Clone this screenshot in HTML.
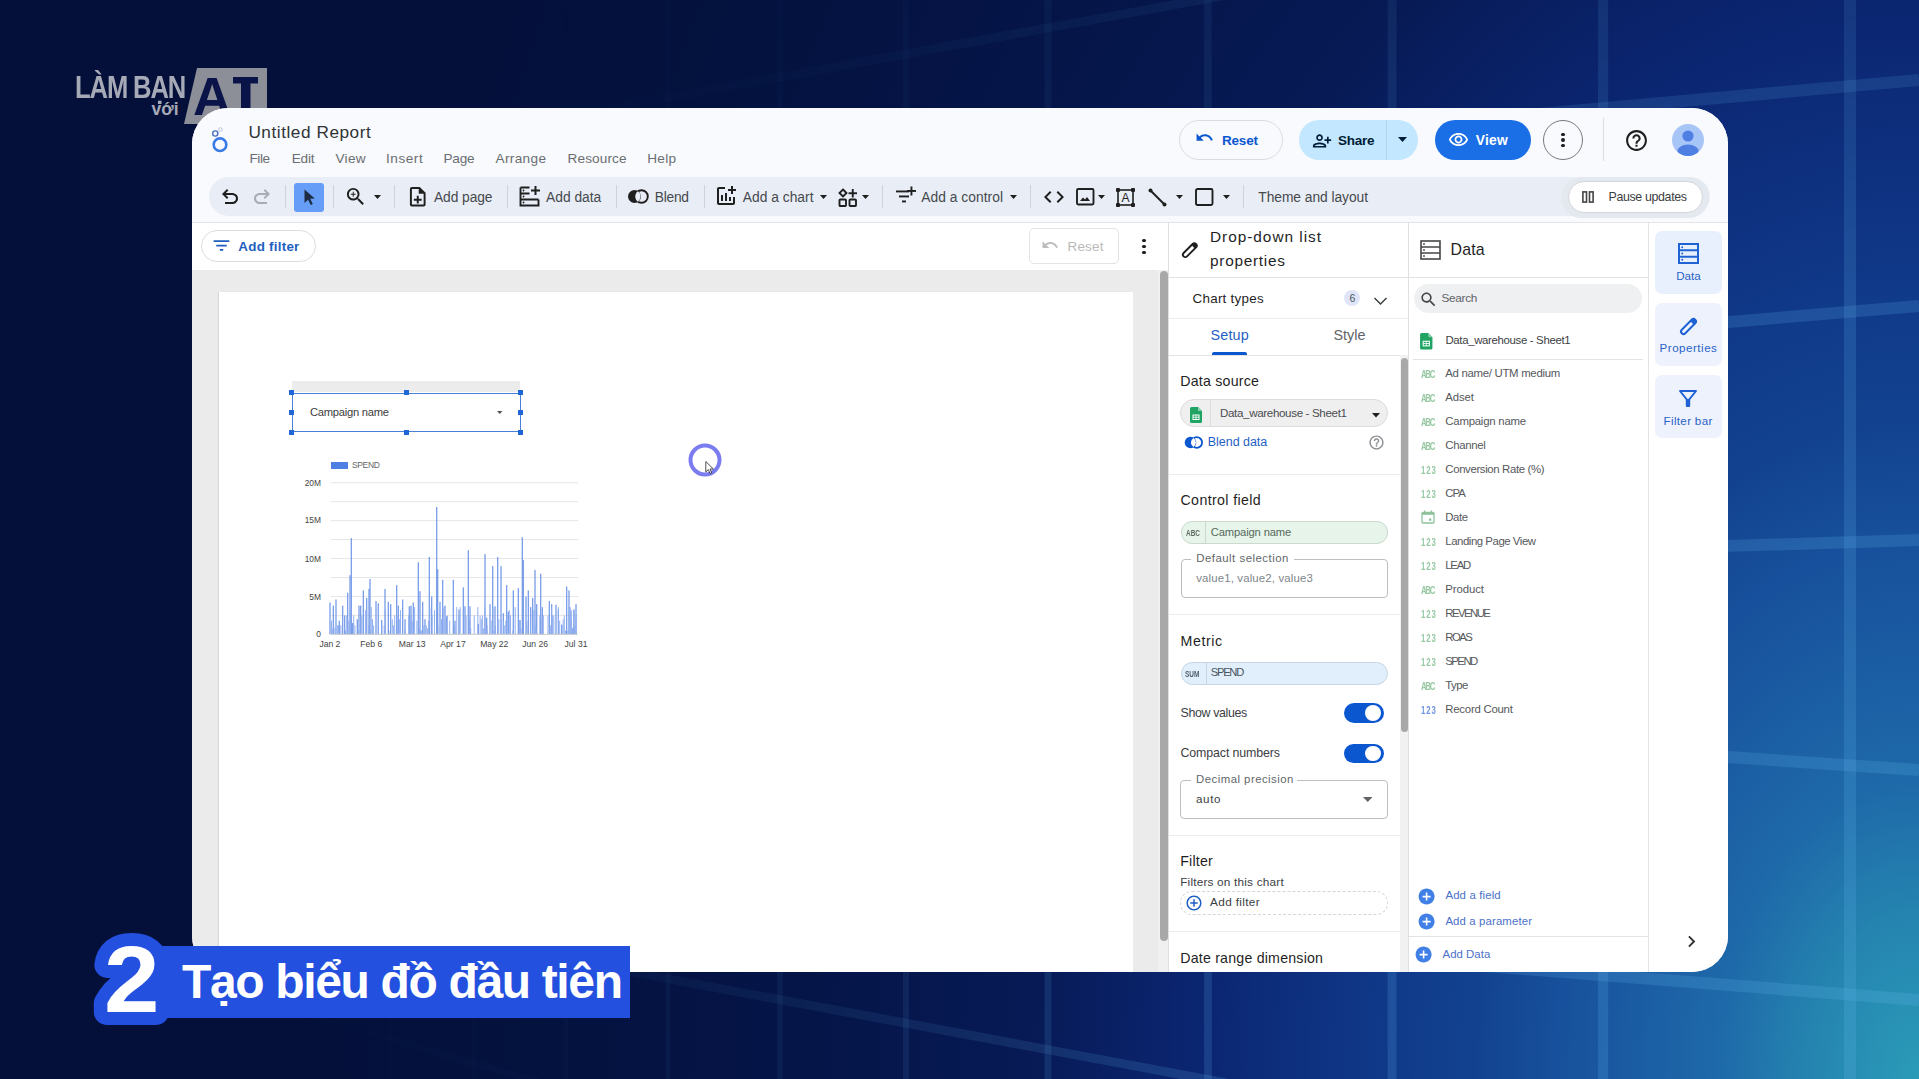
<!DOCTYPE html>
<html><head><meta charset="utf-8"><style>
html,body{margin:0;padding:0;}
body{width:1919px;height:1079px;overflow:hidden;position:relative;font-family:"Liberation Sans",sans-serif;background:#03103c;}
.t{position:absolute;white-space:nowrap;line-height:1;}
.b{position:absolute;box-sizing:border-box;}
</style></head><body>
<div class="b" style="left:0;top:0;width:1919px;height:1079px;background:radial-gradient(ellipse 1620px 2400px at 1919px 1079px, #2b9bb8 0.0%, #2585b0 6.7%, #1e69a9 12.5%, #17509c 22.5%, #12428f 27.5%, #103a8a 32.5%, #0b2672 44.2%, #071a55 55.0%, #051548 68.3%, #04123f 83.3%, #04103a 100.0%);"></div>
<svg class="b" style="left:0px;top:0px;-webkit-mask-image:radial-gradient(ellipse 1900px 2300px at 1919px 1079px, #000 0%, rgba(0,0,0,0.9) 36%, rgba(0,0,0,0.45) 55%, rgba(0,0,0,0.15) 70%, rgba(0,0,0,0) 86%);mask-image:radial-gradient(ellipse 1900px 2300px at 1919px 1079px, #000 0%, rgba(0,0,0,0.9) 36%, rgba(0,0,0,0.45) 55%, rgba(0,0,0,0.15) 70%, rgba(0,0,0,0) 86%);" width="1919" height="1079" viewBox="0 0 1919 1079"><rect x="224.3" y="0" width="3.4" height="1079" fill="rgba(100,185,240,0.2)"/><rect x="312.2" y="0" width="3.6" height="1079" fill="rgba(100,185,240,0.2)"/><rect x="388.1" y="0" width="3.9" height="1079" fill="rgba(100,185,240,0.2)"/><rect x="471.9" y="0" width="4.2" height="1079" fill="rgba(100,185,240,0.2)"/><rect x="563.7" y="0" width="4.5" height="1079" fill="rgba(100,185,240,0.2)"/><rect x="665.5" y="0" width="5.0" height="1079" fill="rgba(100,185,240,0.2)"/><rect x="777.3" y="0" width="5.5" height="1079" fill="rgba(100,185,240,0.2)"/><rect x="903.0" y="0" width="6.1" height="1079" fill="rgba(100,185,240,0.2)"/><rect x="1044.6" y="0" width="6.8" height="1079" fill="rgba(100,185,240,0.2)"/><rect x="1204.1" y="0" width="7.7" height="1079" fill="rgba(100,185,240,0.2)"/><rect x="1387.6" y="0" width="8.9" height="1079" fill="rgba(100,185,240,0.2)"/><rect x="1597.9" y="0" width="10.3" height="1079" fill="rgba(100,185,240,0.2)"/><rect x="1844.0" y="0" width="12.0" height="1079" fill="rgba(100,185,240,0.2)"/><line x1="0" y1="220.0" x2="1919" y2="-131.8" stroke="rgba(100,185,240,0.2)" stroke-width="9"/><line x1="0" y1="250.8" x2="1919" y2="80.0" stroke="rgba(100,185,240,0.2)" stroke-width="12"/><line x1="0" y1="466.8" x2="1919" y2="306.0" stroke="rgba(100,185,240,0.2)" stroke-width="12"/><line x1="0" y1="600.3" x2="1919" y2="540.0" stroke="rgba(100,185,240,0.2)" stroke-width="12"/><line x1="0" y1="639.4" x2="1919" y2="770.0" stroke="rgba(100,185,240,0.2)" stroke-width="12"/><line x1="0" y1="849.3" x2="1919" y2="1000.0" stroke="rgba(100,185,240,0.2)" stroke-width="12"/><line x1="0" y1="854.2" x2="1919" y2="1212.2" stroke="rgba(100,185,240,0.2)" stroke-width="9"/><line x1="0" y1="926.4" x2="1919" y2="1480.1" stroke="rgba(100,185,240,0.2)" stroke-width="7"/></svg>
<div class="t" style="left:75px;top:71px;font-size:32px;font-weight:700;color:#a6a9b6;letter-spacing:-1.4px;transform:scaleX(0.80);transform-origin:left top;">LÀM BẠN</div>
<div class="t" style="left:151.5px;top:101px;font-size:17.5px;font-weight:700;color:#a6a9b6;">với</div>
<svg class="b" style="left:184px;top:68px;" width="84" height="56" viewBox="0 0 84 56"><polygon points="13,0 83,0 83,56 0,56" fill="#8d8f98"/><text x="9" y="47" font-family="Liberation Sans" font-weight="700" font-size="53" fill="#0a1448">A</text><rect x="49" y="9" width="25" height="6.5" fill="#0a1448"/><rect x="57" y="9" width="9.5" height="47" fill="#0a1448"/></svg>
<div class="b" style="left:192px;top:108px;width:1536px;height:864px;border-radius:36px;overflow:hidden;background:#fff;">
<div class="b" style="left:-192px;top:-108px;width:1919px;height:1079px;">
<div class="b" style="left:192px;top:108px;width:1536px;height:114px;background:#f8fafd;"></div>
<div class="b" style="left:192px;top:222px;width:1536px;height:1px;background:#e3e5e8;"></div>
<svg class="b" style="left:208px;top:125px;" width="26" height="30" viewBox="0 0 26 30"><circle cx="12" cy="19.7" r="6.3" fill="none" stroke="#3b7be8" stroke-width="2.6"/><circle cx="7.3" cy="8.5" r="2.6" fill="none" stroke="#4a6fc0" stroke-width="1.4"/><circle cx="12.4" cy="4.5" r="1.8" fill="none" stroke="#b8c4da" stroke-width="1"/></svg>
<div class="t" id="t0" style="left:248.4px;top:124.4px;font-size:17.20px;color:#303336;font-weight:400;letter-spacing:0.554px;">Untitled Report</div>
<div class="t" id="t1" style="left:249.5px;top:151.7px;font-size:13.60px;color:#6b6e72;font-weight:400;letter-spacing:-0.469px;">File</div>
<div class="t" id="t2" style="left:291.7px;top:151.7px;font-size:13.60px;color:#6b6e72;font-weight:400;letter-spacing:-0.175px;">Edit</div>
<div class="t" id="t3" style="left:335.4px;top:151.7px;font-size:13.60px;color:#6b6e72;font-weight:400;letter-spacing:0.326px;">View</div>
<div class="t" id="t4" style="left:386.0px;top:151.7px;font-size:13.60px;color:#6b6e72;font-weight:400;letter-spacing:0.539px;">Insert</div>
<div class="t" id="t5" style="left:443.4px;top:151.7px;font-size:13.60px;color:#6b6e72;font-weight:400;letter-spacing:-0.154px;">Page</div>
<div class="t" id="t6" style="left:495.6px;top:151.7px;font-size:13.60px;color:#6b6e72;font-weight:400;letter-spacing:0.337px;">Arrange</div>
<div class="t" id="t7" style="left:567.5px;top:151.7px;font-size:13.60px;color:#6b6e72;font-weight:400;letter-spacing:0.130px;">Resource</div>
<div class="t" id="t8" style="left:647.3px;top:151.7px;font-size:13.60px;color:#6b6e72;font-weight:400;letter-spacing:0.247px;">Help</div>
<div class="b" style="left:1179px;top:120px;width:104px;height:40px;border:1px solid #dadce0;border-radius:20px;background:#f8fafd;"></div>
<svg class="b" style="left:1194.5px;top:127.5px;" width="19" height="19" viewBox="0 0 24 24"><path d="M12.5 8c-2.65 0-5.05.99-6.9 2.6L2 7v9h9l-3.62-3.62c1.39-1.16 3.16-1.88 5.12-1.88 3.54 0 6.55 2.31 7.6 5.5l2.37-.78C21.08 11.03 17.15 8 12.5 8z" fill="#0b57d0"/></svg>
<div class="t" id="t9" style="left:1222.0px;top:134.2px;font-size:13.50px;color:#0b57d0;font-weight:700;letter-spacing:-0.194px;">Reset</div>
<div class="b" style="left:1299px;top:120px;width:119px;height:40px;border-radius:20px;background:#c2e7ff;"></div>
<div class="b" style="left:1386px;top:120px;width:1px;height:40px;background:#aed3ee;"></div>
<svg class="b" style="left:1311.5px;top:131px;" width="20" height="18" viewBox="0 0 20 18"><g transform="translate(20,0) scale(-1,1)"><path d="M15 12c2.21 0 4-1.79 4-4s-1.79-4-4-4-4 1.79-4 4 1.79 4 4 4zm0-6c1.1 0 2 .9 2 2s-.9 2-2 2-2-.9-2-2 .9-2 2-2zm0 8c-2.67 0-8 1.34-8 4v2h16v-2c0-2.66-5.33-4-8-4zm-6 4c.22-.72 3.31-2 6-2 2.7 0 5.8 1.29 6 2H9zm-3-3v-3h3v-2H6V7H4v3H1v2h3v3z" fill="#001d35" transform="scale(0.83)"/></g></svg>
<div class="t" id="t10" style="left:1338.0px;top:133.8px;font-size:13.50px;color:#001d35;font-weight:700;letter-spacing:-0.283px;">Share</div>
<svg class="b" style="left:1397.5px;top:137px;" width="9" height="5" viewBox="0 0 9 5"><path d="M0 0h9L4.5 5z" fill="#001d35"/></svg>
<div class="b" style="left:1434.5px;top:120px;width:96.5px;height:40px;border-radius:20px;background:#1a6fe6;"></div>
<svg class="b" style="left:1448px;top:129px;" width="21" height="21" viewBox="0 0 24 24"><path d="M12 6.5c3.79 0 7.17 2.13 8.82 5.5-1.65 3.37-5.02 5.5-8.82 5.5S4.83 15.37 3.18 12C4.83 8.63 8.21 6.5 12 6.5m0-2C7 4.5 2.73 7.61 1 12c1.73 4.39 6 7.5 11 7.5s9.27-3.11 11-7.5c-1.73-4.39-6-7.5-11-7.5zm0 5c1.38 0 2.5 1.12 2.5 2.5s-1.12 2.5-2.5 2.5-2.5-1.12-2.5-2.5 1.12-2.5 2.5-2.5m0-2c-2.48 0-4.5 2.02-4.5 4.5s2.02 4.5 4.5 4.5 4.5-2.02 4.5-4.5-2.02-4.5-4.5-4.5z" fill="#ffffff"/></svg>
<div class="t" id="t11" style="left:1475.7px;top:133.8px;font-size:13.80px;color:#ffffff;font-weight:700;letter-spacing:0.266px;">View</div>
<div class="b" style="left:1543px;top:120px;width:40px;height:40px;border:1px solid #79797c;border-radius:20px;"></div>
<div class="b" style="left:1561.4px;top:133.1px;width:3.3px;height:3.3px;background:#1f1f1f;border-radius:2px;"></div>
<div class="b" style="left:1561.4px;top:138.4px;width:3.3px;height:3.3px;background:#1f1f1f;border-radius:2px;"></div>
<div class="b" style="left:1561.4px;top:143.7px;width:3.3px;height:3.3px;background:#1f1f1f;border-radius:2px;"></div>
<div class="b" style="left:1603px;top:118px;width:1px;height:43px;background:#dcdde0;"></div>
<svg class="b" style="left:1623.5px;top:127.5px;" width="25" height="25" viewBox="0 0 24 24"><path d="M11 18h2v-2h-2v2zm1-16C6.48 2 2 6.48 2 12s4.48 10 10 10 10-4.48 10-10S17.52 2 12 2zm0 18c-4.41 0-8-3.59-8-8s3.59-8 8-8 8 3.59 8 8-3.59 8-8 8zm0-14c-2.21 0-4 1.79-4 4h2c0-1.1.9-2 2-2s2 .9 2 2c0 2-3 1.75-3 5h2c0-2.25 3-2.5 3-5 0-2.21-1.79-4-4-4z" fill="#1f1f1f"/></svg>
<svg class="b" style="left:1672px;top:124px;" width="32" height="32" viewBox="0 0 32 32"><defs><clipPath id="av"><circle cx="16" cy="16" r="16"/></clipPath></defs><circle cx="16" cy="16" r="16" fill="#a8c5f7"/><g clip-path="url(#av)"><circle cx="16" cy="12" r="5.6" fill="#4f7fe3"/><ellipse cx="16" cy="27" rx="10.5" ry="6.5" fill="#4f7fe3"/></g></svg>
<div class="b" style="left:209px;top:177px;width:1501px;height:39px;border-radius:20px;background:#e9eef6;"></div>
<svg class="b" style="left:218px;top:184.5px;" width="24" height="24" viewBox="0 0 24 24"><path d="M7 19v-2h7.1c1.05 0 1.96-.33 2.74-1S18 14.5 18 13.5s-.39-1.83-1.16-2.5S15.15 10 14.1 10H7.8l2.6 2.6L9 14 4 9l5-5 1.4 1.4L7.8 8h6.3c1.62 0 3 .52 4.16 1.58S20 11.93 20 13.5s-.58 2.87-1.74 3.93S15.72 19 14.1 19H7z" fill="#1f1f1f"/></svg>
<svg class="b" style="left:250px;top:184.5px;" width="24" height="24" viewBox="0 0 24 24"><g transform="translate(24,0) scale(-1,1)"><path d="M7 19v-2h7.1c1.05 0 1.96-.33 2.74-1S18 14.5 18 13.5s-.39-1.83-1.16-2.5S15.15 10 14.1 10H7.8l2.6 2.6L9 14 4 9l5-5 1.4 1.4L7.8 8h6.3c1.62 0 3 .52 4.16 1.58S20 11.93 20 13.5s-.58 2.87-1.74 3.93S15.72 19 14.1 19H7z" fill="#a9adb3"/></g></svg>
<div class="b" style="left:285px;top:185px;width:1px;height:23px;background:#cfd3d9;"></div>
<div class="b" style="left:294px;top:182.6px;width:30px;height:29.5px;background:#669df6;border-radius:3px;"></div>
<svg class="b" style="left:300px;top:187px;" width="18" height="20" viewBox="0 0 18 20"><path d="M4.5 2.5 L4.5 16 L8 12.8 L10.8 18 L12.8 17 L10.2 11.8 L14.8 11.6 Z" fill="#1e2b45"/></svg>
<div class="b" style="left:333px;top:185px;width:1px;height:23px;background:#cfd3d9;"></div>
<svg class="b" style="left:344px;top:185px;" width="23.3" height="23.3" viewBox="0 0 24 24"><path d="M15.5 14h-.79l-.28-.27A6.471 6.471 0 0 0 16 9.5 6.5 6.5 0 1 0 9.5 16c1.61 0 3.09-.59 4.23-1.57l.27.28v.79l5 4.99L20.49 19l-4.99-5zm-6 0C7.01 14 5 11.99 5 9.5S7.01 5 9.5 5 14 7.01 14 9.5 11.99 14 9.5 14zm.5-7H9v2H7v1h2v2h1v-2h2V9h-2z" fill="#1f1f1f"/></svg>
<svg class="b" style="left:374px;top:195px;" width="7" height="4" viewBox="0 0 7 4"><path d="M0 0h7L3.5 4z" fill="#1f1f1f"/></svg>
<div class="b" style="left:394px;top:185px;width:1px;height:23px;background:#cfd3d9;"></div>
<svg class="b" style="left:405.5px;top:184.5px;" width="23.5" height="23.5" viewBox="0 0 24 24"><path d="M13 11h-2v3H8v2h3v3h2v-3h3v-2h-3zm1-9H6c-1.1 0-2 .9-2 2v16c0 1.1.89 2 1.99 2H18c1.1 0 2-.9 2-2V8l-6-6zm4 18H6V4h7v5h5v11z" fill="#1f1f1f"/></svg>
<div class="t" id="t12" style="left:434.0px;top:191.3px;font-size:13.80px;color:#46494d;font-weight:400;letter-spacing:-0.083px;">Add page</div>
<div class="b" style="left:506.5px;top:185px;width:1px;height:23px;background:#cfd3d9;"></div>
<svg class="b" style="left:519px;top:186px;" width="22" height="21" viewBox="0 0 22 21"><g fill="none" stroke="#1f1f1f" stroke-width="1.9"><path d="M1.5 1.5h9"/><path d="M1.5 1.5v18h18v-6"/><path d="M1.5 7.5h9"/><path d="M1.5 13.5h18"/></g><g fill="#1f1f1f"><rect x="15.5" y="0" width="2" height="9"/><rect x="12" y="3.5" width="9" height="2"/><circle cx="4.5" cy="4.5" r="0.9"/><circle cx="4.5" cy="10.5" r="0.9"/><circle cx="4.5" cy="16.5" r="0.9"/></g></svg>
<div class="t" id="t13" style="left:546.0px;top:191.3px;font-size:13.80px;color:#46494d;font-weight:400;letter-spacing:0.009px;">Add data</div>
<div class="b" style="left:615.5px;top:185px;width:1px;height:23px;background:#cfd3d9;"></div>
<svg class="b" style="left:627px;top:188.5px;" width="22" height="15" viewBox="0 0 22 15"><circle cx="7.5" cy="7.5" r="6.5" fill="#1f1f1f"/><circle cx="14.5" cy="7.5" r="6.3" fill="none" stroke="#1f1f1f" stroke-width="1.9"/><path d="M11 2.3 A6.5 6.5 0 0 1 11 12.7 A6.3 6.3 0 0 1 11 2.3z" fill="#e9eef6"/></svg>
<div class="t" id="t14" style="left:654.7px;top:191.3px;font-size:13.80px;color:#46494d;font-weight:400;letter-spacing:-0.249px;">Blend</div>
<div class="b" style="left:703.5px;top:185px;width:1px;height:23px;background:#cfd3d9;"></div>
<svg class="b" style="left:714px;top:184px;" width="24" height="24" viewBox="0 0 24 24"><path d="M22 5v2h-3v3h-2V7h-3V5h3V2h2v3h3zm-3 14H5V5h6V3H5c-1.1 0-2 .9-2 2v14c0 1.1.9 2 2 2h14c1.1 0 2-.9 2-2v-6h-2v6zm-4-6v4h2v-4h-2zm-4 4h2V9h-2v8zm-2 0v-6H7v6h2z" fill="#1f1f1f"/></svg>
<div class="t" id="t15" style="left:742.8px;top:191.3px;font-size:13.80px;color:#46494d;font-weight:400;letter-spacing:0.014px;">Add a chart</div>
<svg class="b" style="left:819.5px;top:195px;" width="7" height="4" viewBox="0 0 7 4"><path d="M0 0h7L3.5 4z" fill="#1f1f1f"/></svg>
<svg class="b" style="left:838px;top:187.5px;" width="20" height="20" viewBox="0 0 20 20"><g fill="none" stroke="#1f1f1f" stroke-width="1.9"><path d="M5 1.5 L8.5 5 L5 8.5 L1.5 5 Z"/><rect x="1.5" y="11.5" width="6.5" height="6.5" rx="0.8"/><rect x="11.5" y="11.5" width="6.5" height="6.5" rx="0.8"/></g><g fill="#1f1f1f"><rect x="13.8" y="1" width="1.9" height="8.5"/><rect x="10.5" y="4.3" width="8.5" height="1.9"/></g></svg>
<svg class="b" style="left:862px;top:195px;" width="7" height="4" viewBox="0 0 7 4"><path d="M0 0h7L3.5 4z" fill="#1f1f1f"/></svg>
<div class="b" style="left:881.5px;top:185px;width:1px;height:23px;background:#cfd3d9;"></div>
<svg class="b" style="left:895px;top:186px;" width="21" height="20" viewBox="0 0 21 20"><g fill="#1f1f1f"><rect x="1" y="4.5" width="13" height="1.9"/><rect x="4" y="9.5" width="10" height="1.9"/><rect x="7" y="14.5" width="4" height="1.9"/><rect x="15.5" y="0.5" width="1.9" height="9"/><rect x="12" y="4" width="9" height="1.9"/></g></svg>
<div class="t" id="t16" style="left:921.2px;top:191.3px;font-size:13.80px;color:#46494d;font-weight:400;letter-spacing:0.041px;">Add a control</div>
<svg class="b" style="left:1010px;top:195px;" width="7" height="4" viewBox="0 0 7 4"><path d="M0 0h7L3.5 4z" fill="#1f1f1f"/></svg>
<div class="b" style="left:1030px;top:185px;width:1px;height:23px;background:#cfd3d9;"></div>
<svg class="b" style="left:1041.5px;top:184.5px;" width="24" height="24" viewBox="0 0 24 24"><path d="M9.4 16.6L4.8 12l4.6-4.6L8 6l-6 6 6 6 1.4-1.4zm5.2 0l4.6-4.6-4.6-4.6L16 6l6 6-6 6-1.4-1.4z" fill="#1f1f1f"/></svg>
<svg class="b" style="left:1075.5px;top:188px;" width="19" height="18" viewBox="0 0 19 18"><rect x="1" y="1" width="16.5" height="15.5" rx="1.2" fill="none" stroke="#1f1f1f" stroke-width="1.9"/><path d="M4 13 L7 9.5 L9 11.5 L11 9 L14 13 Z" fill="#1f1f1f"/></svg>
<svg class="b" style="left:1098px;top:195px;" width="7" height="4" viewBox="0 0 7 4"><path d="M0 0h7L3.5 4z" fill="#1f1f1f"/></svg>
<svg class="b" style="left:1116px;top:187.5px;" width="19" height="19" viewBox="0 0 19 19"><rect x="2" y="2" width="15" height="15" fill="none" stroke="#1f1f1f" stroke-width="1.6"/><g fill="#1f1f1f"><rect x="0" y="0" width="4" height="4" rx="1"/><rect x="15" y="0" width="4" height="4" rx="1"/><rect x="0" y="15" width="4" height="4" rx="1"/><rect x="15" y="15" width="4" height="4" rx="1"/></g><text x="9.5" y="14.3" text-anchor="middle" font-family="Liberation Sans" font-size="12" fill="#1f1f1f">A</text></svg>
<svg class="b" style="left:1147.5px;top:187.5px;" width="20" height="19" viewBox="0 0 20 19"><path d="M2.5 2.5 L16.5 16.5" stroke="#1f1f1f" stroke-width="2"/><circle cx="2.5" cy="2.5" r="2" fill="#1f1f1f"/><circle cx="16.5" cy="16.5" r="2" fill="#1f1f1f"/></svg>
<svg class="b" style="left:1175.5px;top:195px;" width="7" height="4" viewBox="0 0 7 4"><path d="M0 0h7L3.5 4z" fill="#1f1f1f"/></svg>
<svg class="b" style="left:1195px;top:188px;" width="19" height="18" viewBox="0 0 19 18"><rect x="1" y="1" width="16.5" height="16" rx="1.5" fill="none" stroke="#1f1f1f" stroke-width="1.9"/></svg>
<svg class="b" style="left:1222.5px;top:195px;" width="7" height="4" viewBox="0 0 7 4"><path d="M0 0h7L3.5 4z" fill="#1f1f1f"/></svg>
<div class="b" style="left:1242.5px;top:185px;width:1px;height:23px;background:#cfd3d9;"></div>
<div class="t" id="t17" style="left:1258.3px;top:191.3px;font-size:13.80px;color:#46494d;font-weight:400;letter-spacing:-0.050px;">Theme and layout</div>
<div class="b" style="left:1561px;top:176.5px;width:148px;height:41px;border-radius:21px;background:#e4e8ef;"></div>
<div class="b" style="left:1567.5px;top:181.4px;width:135.5px;height:31.2px;border:1px solid #d2d5da;border-radius:16px;background:#fff;"></div>
<svg class="b" style="left:1581.5px;top:190.5px;" width="12" height="12" viewBox="0 0 12 12"><rect x="0.9" y="0.9" width="3.6" height="10.2" fill="none" stroke="#444" stroke-width="1.6"/><rect x="7.5" y="0.9" width="3.6" height="10.2" fill="none" stroke="#444" stroke-width="1.6"/></svg>
<div class="t" id="t18" style="left:1608.5px;top:190.7px;font-size:12.40px;color:#3c4043;font-weight:400;letter-spacing:-0.348px;">Pause updates</div>
<div class="b" style="left:200.5px;top:230px;width:115px;height:32.3px;border:1px solid #dadce0;border-radius:16px;background:#fff;"></div>
<svg class="b" style="left:211px;top:234.5px;" width="21" height="21" viewBox="0 0 24 24"><path d="M10 18h4v-2h-4v2zM3 6v2h18V6H3zm3 7h12v-2H6v2z" fill="#1f5fbf"/></svg>
<div class="t" id="t19" style="left:238.3px;top:240.3px;font-size:13.40px;color:#1f5fbf;font-weight:700;letter-spacing:0.247px;">Add filter</div>
<div class="b" style="left:1029.3px;top:228.2px;width:90px;height:35.4px;border:1px solid #e3e3e3;border-radius:5px;background:#fff;"></div>
<svg class="b" style="left:1040.5px;top:236px;" width="18" height="18" viewBox="0 0 24 24"><path d="M12.5 8c-2.65 0-5.05.99-6.9 2.6L2 7v9h9l-3.62-3.62c1.39-1.16 3.16-1.88 5.12-1.88 3.54 0 6.55 2.31 7.6 5.5l2.37-.78C21.08 11.03 17.15 8 12.5 8z" fill="#bdbdbd"/></svg>
<div class="t" id="t20" style="left:1067.6px;top:239.9px;font-size:13.40px;color:#b9b9b9;font-weight:400;letter-spacing:0.201px;">Reset</div>
<div class="b" style="left:1142.2px;top:238.6px;width:3.6px;height:3.6px;background:#1f1f1f;border-radius:2px;"></div>
<div class="b" style="left:1142.2px;top:244.6px;width:3.6px;height:3.6px;background:#1f1f1f;border-radius:2px;"></div>
<div class="b" style="left:1142.2px;top:250.6px;width:3.6px;height:3.6px;background:#1f1f1f;border-radius:2px;"></div>
<div class="b" style="left:192px;top:270px;width:976px;height:702px;background:#ebebeb;"></div>
<div class="b" style="left:219px;top:292px;width:914px;height:700px;background:#fff;box-shadow:-1px 0 1px rgba(0,0,0,0.08);"></div>
<div class="b" style="left:1158px;top:270px;width:10px;height:702px;background:#f0f0f0;"></div>
<div class="b" style="left:1160px;top:271px;width:7.5px;height:670px;background:#a8a8a8;border-radius:4px;"></div>
<div class="b" style="left:1168px;top:222px;width:1px;height:750px;background:#e0e0e0;"></div>
<div class="b" style="left:1169px;top:223px;width:239px;height:749px;background:#fff;"></div>
<div class="b" style="left:1408px;top:222px;width:1px;height:750px;background:#e0e0e0;"></div>
<svg class="b" style="left:1180px;top:239.5px;" width="20" height="20" viewBox="0 0 20 20"><g transform="rotate(-45 10 10)"><rect x="1" y="7.6" width="17.5" height="4.8" rx="2.4" fill="none" stroke="#1f1f1f" stroke-width="1.9"/><rect x="14.5" y="7.6" width="4" height="4.8" rx="1.5" fill="#1f1f1f"/></g></svg>
<div class="t" id="t21" style="left:1210.0px;top:229.2px;font-size:15.40px;color:#1f1f1f;font-weight:400;letter-spacing:0.971px;">Drop-down list</div>
<div class="t" id="t22" style="left:1210.0px;top:253.1px;font-size:15.40px;color:#1f1f1f;font-weight:400;letter-spacing:0.728px;">properties</div>
<div class="b" style="left:1169px;top:277px;width:239px;height:1px;background:#e3e3e3;"></div>
<div class="t" id="t23" style="left:1192.5px;top:291.5px;font-size:13.40px;color:#1f1f1f;font-weight:400;letter-spacing:0.272px;">Chart types</div>
<div class="b" style="left:1344.3px;top:289.7px;width:16px;height:16px;background:#dfe5f7;border-radius:8px;"></div>
<div class="t" id="t24" style="left:1352.3px;top:292.9px;font-size:10.50px;color:#4b5563;font-weight:400;letter-spacing:0.000px;transform:translateX(-50%);">6</div>
<svg class="b" style="left:1373px;top:295px;" width="15" height="12" viewBox="0 0 15 12"><path d="M1.5 3 L7.5 9 L13.5 3" fill="none" stroke="#3c4043" stroke-width="1.5"/></svg>
<div class="b" style="left:1169px;top:317.5px;width:239px;height:1px;background:#ececec;"></div>
<div class="t" id="t25" style="left:1210.4px;top:328.1px;font-size:14.40px;color:#1f5fc4;font-weight:400;letter-spacing:0.195px;">Setup</div>
<div class="t" id="t26" style="left:1333.5px;top:328.1px;font-size:14.40px;color:#5f6368;font-weight:400;letter-spacing:0.001px;">Style</div>
<div class="b" style="left:1212px;top:351.5px;width:35px;height:3px;background:#0b57d0;border-radius:2px 2px 0 0;"></div>
<div class="b" style="left:1169px;top:354.5px;width:239px;height:1px;background:#e3e3e3;"></div>
<div class="b" style="left:1400px;top:355px;width:8px;height:617px;background:#f1f1f1;"></div>
<div class="b" style="left:1401px;top:358px;width:6.5px;height:374px;background:#a8a8a8;border-radius:4px;"></div>
<div class="t" id="t27" style="left:1180.3px;top:373.7px;font-size:14.20px;color:#1f1f1f;font-weight:400;letter-spacing:0.210px;">Data source</div>
<div class="b" style="left:1180.3px;top:399px;width:207.6px;height:27.5px;border:1px solid #dcdcdc;border-radius:14px;background:#efefef;"></div>
<div class="b" style="left:1209.5px;top:400px;width:1px;height:25.5px;background:#dcdcdc;"></div>
<svg class="b" style="left:1189.5px;top:406.5px;" width="12" height="16" viewBox="0 0 12 16"><path d="M0 1.5 A1.5 1.5 0 0 1 1.5 0 H8 L12 4 V14.5 A1.5 1.5 0 0 1 10.5 16 H1.5 A1.5 1.5 0 0 1 0 14.5 Z" fill="#1fa463"/><path d="M8 0 L12 4 H9 A1 1 0 0 1 8 3 Z" fill="#8ed1b1"/><rect x="3" y="8" width="6" height="4.5" fill="none" stroke="#fff" stroke-width="1"/><path d="M6 8v4.5M3 10.2h6" stroke="#fff" stroke-width="0.8"/></svg>
<div class="t" id="t28" style="left:1220.0px;top:407.2px;font-size:11.60px;color:#4a4d51;font-weight:400;letter-spacing:-0.351px;">Data_warehouse - Sheet1</div>
<svg class="b" style="left:1372px;top:413px;" width="8" height="4.5" viewBox="0 0 8 4.5"><path d="M0 0h8L4.0 4.5z" fill="#1f1f1f"/></svg>
<svg class="b" style="left:1183.5px;top:436px;" width="20" height="13" viewBox="0 0 20 13"><circle cx="6.5" cy="6.5" r="5.8" fill="#0b57d0"/><circle cx="12.8" cy="6.5" r="5.3" fill="none" stroke="#0b57d0" stroke-width="1.8"/><path d="M9.6 1.9 A5.8 5.8 0 0 1 9.6 11.1 A5.3 5.3 0 0 1 9.6 1.9z" fill="#fff"/></svg>
<div class="t" id="t29" style="left:1207.8px;top:435.7px;font-size:12.50px;color:#1f5fc4;font-weight:400;letter-spacing:-0.042px;">Blend data</div>
<svg class="b" style="left:1367.5px;top:434px;" width="17" height="17" viewBox="0 0 24 24"><path d="M11 18h2v-2h-2v2zm1-16C6.48 2 2 6.48 2 12s4.48 10 10 10 10-4.48 10-10S17.52 2 12 2zm0 18c-4.41 0-8-3.59-8-8s3.59-8 8-8 8 3.59 8 8-3.59 8-8 8zm0-14c-2.21 0-4 1.79-4 4h2c0-1.1.9-2 2-2s2 .9 2 2c0 2-3 1.75-3 5h2c0-2.25 3-2.5 3-5 0-2.21-1.79-4-4-4z" fill="#8a8d91"/></svg>
<div class="b" style="left:1169px;top:474px;width:231px;height:1px;background:#ebebeb;"></div>
<div class="t" id="t30" style="left:1180.5px;top:492.6px;font-size:14.20px;color:#1f1f1f;font-weight:400;letter-spacing:0.374px;">Control field</div>
<div class="b" style="left:1180.5px;top:521.4px;width:207px;height:22.2px;border:1px solid #c9d9cd;border-radius:11px;background:#e6f4ea;"></div>
<div class="b" style="left:1205.3px;top:522.4px;width:1px;height:20.2px;background:#c9d9cd;"></div>
<div class="t" id="t31" style="left:1185.8px;top:528.2px;font-size:9.80px;color:#5b6b60;font-weight:700;letter-spacing:0.000px;transform:scaleX(0.66);transform-origin:left;">ABC</div>
<div class="t" id="t32" style="left:1210.7px;top:526.7px;font-size:11.20px;color:#56695c;font-weight:400;letter-spacing:-0.125px;">Campaign name</div>
<div class="b" style="left:1180.5px;top:558.6px;width:207px;height:39.4px;border:1px solid #bdbdbd;border-radius:4px;"></div>
<div class="b" style="left:1191px;top:555px;width:103px;height:6px;background:#fff;"></div>
<div class="t" id="t33" style="left:1196.2px;top:553.3px;font-size:11.40px;color:#63676b;font-weight:400;letter-spacing:0.499px;">Default selection</div>
<div class="t" id="t34" style="left:1196.2px;top:572.8px;font-size:11.40px;color:#80868b;font-weight:400;letter-spacing:0.154px;">value1, value2, value3</div>
<div class="b" style="left:1169px;top:614px;width:231px;height:1px;background:#ebebeb;"></div>
<div class="t" id="t35" style="left:1180.5px;top:633.6px;font-size:14.20px;color:#1f1f1f;font-weight:400;letter-spacing:0.614px;">Metric</div>
<div class="b" style="left:1180.5px;top:661.7px;width:207.2px;height:23px;border:1px solid #c6d6e3;border-radius:11.5px;background:#e1effc;"></div>
<div class="b" style="left:1205.5px;top:662.7px;width:1px;height:21px;background:#c6d6e3;"></div>
<div class="t" id="t36" style="left:1184.7px;top:668.9px;font-size:9.80px;color:#50606e;font-weight:700;letter-spacing:0.000px;transform:scaleX(0.66);transform-origin:left;">SUM</div>
<div class="t" id="t37" style="left:1210.7px;top:667.3px;font-size:11.20px;color:#4a5560;font-weight:400;letter-spacing:-1.240px;">SPEND</div>
<div class="t" id="t38" style="left:1180.5px;top:706.5px;font-size:12.40px;color:#3c4043;font-weight:400;letter-spacing:-0.356px;">Show values</div>
<div class="t" id="t39" style="left:1180.5px;top:746.7px;font-size:12.40px;color:#3c4043;font-weight:400;letter-spacing:-0.124px;">Compact numbers</div>
<div class="b" style="left:1344.3px;top:703.4px;width:39.4px;height:19.4px;background:#0b57d0;border-radius:10px;"></div>
<div class="b" style="left:1365.2px;top:705.3px;width:15.6px;height:15.6px;background:#fff;border-radius:8px;"></div>
<div class="b" style="left:1344.3px;top:743.6px;width:39.4px;height:19.4px;background:#0b57d0;border-radius:10px;"></div>
<div class="b" style="left:1365.2px;top:745.5px;width:15.6px;height:15.6px;background:#fff;border-radius:8px;"></div>
<div class="b" style="left:1180.2px;top:779.6px;width:207.6px;height:39px;border:1px solid #bdbdbd;border-radius:4px;"></div>
<div class="b" style="left:1191px;top:776px;width:106px;height:7px;background:#fff;"></div>
<div class="t" id="t40" style="left:1196.1px;top:774.3px;font-size:11.40px;color:#63676b;font-weight:400;letter-spacing:0.463px;">Decimal precision</div>
<div class="t" id="t41" style="left:1196.1px;top:793.2px;font-size:11.60px;color:#3c4043;font-weight:400;letter-spacing:0.574px;">auto</div>
<svg class="b" style="left:1362.5px;top:797px;" width="9.5" height="5" viewBox="0 0 9.5 5"><path d="M0 0h9.5L4.75 5z" fill="#5f6368"/></svg>
<div class="b" style="left:1169px;top:835px;width:231px;height:1px;background:#ebebeb;"></div>
<div class="t" id="t42" style="left:1180.2px;top:854.2px;font-size:14.20px;color:#1f1f1f;font-weight:400;letter-spacing:0.194px;">Filter</div>
<div class="t" id="t43" style="left:1180.2px;top:877.2px;font-size:11.80px;color:#3c4043;font-weight:400;letter-spacing:0.192px;">Filters on this chart</div>
<div class="b" style="left:1180.2px;top:891px;width:207.6px;height:23.8px;border:1px dashed #d3d5d8;border-radius:12px;"></div>
<svg class="b" style="left:1185.4px;top:893.6px;" width="18" height="18" viewBox="0 0 24 24"><path d="M13 7h-2v4H7v2h4v4h2v-4h4v-2h-4V7zm-1-5C6.48 2 2 6.48 2 12s4.48 10 10 10 10-4.48 10-10S17.52 2 12 2zm0 18c-4.41 0-8-3.59-8-8s3.59-8 8-8 8 3.59 8 8-3.59 8-8 8z" fill="#1f5fc4"/></svg>
<div class="t" id="t44" style="left:1210.0px;top:897.4px;font-size:11.80px;color:#3c4043;font-weight:400;letter-spacing:0.349px;">Add filter</div>
<div class="b" style="left:1169px;top:931.3px;width:231px;height:1px;background:#ebebeb;"></div>
<div class="t" id="t45" style="left:1180.2px;top:950.5px;font-size:14.20px;color:#1f1f1f;font-weight:400;letter-spacing:0.210px;">Date range dimension</div>
<div class="b" style="left:1409px;top:223px;width:239px;height:749px;background:#fff;"></div>
<div class="b" style="left:1648px;top:222px;width:1px;height:750px;background:#e3e3e3;"></div>
<svg class="b" style="left:1420px;top:239.5px;" width="21" height="20" viewBox="0 0 21 20"><g fill="none" stroke="#444746" stroke-width="1.6"><rect x="1" y="1" width="19" height="18"/><path d="M1 7h19M1 13h19"/></g><g fill="#444746"><circle cx="4" cy="4" r="0.9"/><circle cx="4" cy="10" r="0.9"/><circle cx="4" cy="16" r="0.9"/></g></svg>
<div class="t" id="t46" style="left:1450.6px;top:241.5px;font-size:15.90px;color:#1f1f1f;font-weight:400;letter-spacing:0.142px;">Data</div>
<div class="b" style="left:1409px;top:277px;width:239px;height:1px;background:#e3e3e3;"></div>
<div class="b" style="left:1413.5px;top:284.2px;width:228px;height:29px;border-radius:15px;background:#eef0f2;"></div>
<svg class="b" style="left:1418.5px;top:289.5px;" width="19" height="19" viewBox="0 0 24 24"><path d="M15.5 14h-.79l-.28-.27C15.41 12.59 16 11.11 16 9.5 16 5.91 13.09 3 9.5 3S3 5.91 3 9.5 5.91 16 9.5 16c1.61 0 3.09-.59 4.23-1.57l.27.28v.79l5 4.99L20.49 19l-4.99-5zm-6 0C7.01 14 5 11.99 5 9.5S7.01 5 9.5 5 14 7.01 14 9.5 11.99 14 9.5 14z" fill="#444746"/></svg>
<div class="t" id="t47" style="left:1441.5px;top:293.0px;font-size:11.80px;color:#5f6368;font-weight:400;letter-spacing:-0.318px;">Search</div>
<svg class="b" style="left:1420.4px;top:333px;" width="12.5" height="16.5" viewBox="0 0 12 16"><path d="M0 1.5 A1.5 1.5 0 0 1 1.5 0 H8 L12 4 V14.5 A1.5 1.5 0 0 1 10.5 16 H1.5 A1.5 1.5 0 0 1 0 14.5 Z" fill="#1fa463"/><path d="M8 0 L12 4 H9 A1 1 0 0 1 8 3 Z" fill="#8ed1b1"/><rect x="3" y="8" width="6" height="4.5" fill="none" stroke="#fff" stroke-width="1"/><path d="M6 8v4.5M3 10.2h6" stroke="#fff" stroke-width="0.8"/></svg>
<div class="t" id="t48" style="left:1445.4px;top:335.0px;font-size:11.40px;color:#3c4043;font-weight:400;letter-spacing:-0.325px;">Data_warehouse - Sheet1</div>
<div class="b" style="left:1413px;top:358.5px;width:230px;height:1px;background:#e3e3e3;"></div>
<div class="t" id="t49" style="left:1420.8px;top:369.8px;font-size:10.00px;color:#98c8a3;font-weight:700;letter-spacing:-1.663px;transform:scaleX(0.78);transform-origin:left;">ABC</div>
<div class="t" id="t50" style="left:1445.3px;top:368.0px;font-size:11.40px;color:#55585c;font-weight:400;letter-spacing:-0.299px;">Ad name/ UTM medium</div>
<div class="t" id="t51" style="left:1420.8px;top:393.8px;font-size:10.00px;color:#98c8a3;font-weight:700;letter-spacing:-1.663px;transform:scaleX(0.78);transform-origin:left;">ABC</div>
<div class="t" id="t52" style="left:1445.3px;top:392.0px;font-size:11.40px;color:#55585c;font-weight:400;letter-spacing:-0.157px;">Adset</div>
<div class="t" id="t53" style="left:1420.8px;top:417.8px;font-size:10.00px;color:#98c8a3;font-weight:700;letter-spacing:-1.663px;transform:scaleX(0.78);transform-origin:left;">ABC</div>
<div class="t" id="t54" style="left:1445.3px;top:416.0px;font-size:11.40px;color:#55585c;font-weight:400;letter-spacing:-0.232px;">Campaign name</div>
<div class="t" id="t55" style="left:1420.8px;top:441.8px;font-size:10.00px;color:#98c8a3;font-weight:700;letter-spacing:-1.663px;transform:scaleX(0.78);transform-origin:left;">ABC</div>
<div class="t" id="t56" style="left:1445.3px;top:440.0px;font-size:11.40px;color:#55585c;font-weight:400;letter-spacing:-0.323px;">Channel</div>
<div class="t" id="t57" style="left:1420.8px;top:465.8px;font-size:10.00px;color:#98c8a3;font-weight:700;letter-spacing:1.237px;transform:scaleX(0.78);transform-origin:left;">123</div>
<div class="t" id="t58" style="left:1445.3px;top:464.0px;font-size:11.40px;color:#55585c;font-weight:400;letter-spacing:-0.363px;">Conversion Rate (%)</div>
<div class="t" id="t59" style="left:1420.8px;top:489.8px;font-size:10.00px;color:#98c8a3;font-weight:700;letter-spacing:1.237px;transform:scaleX(0.78);transform-origin:left;">123</div>
<div class="t" id="t60" style="left:1445.3px;top:488.0px;font-size:11.40px;color:#55585c;font-weight:400;letter-spacing:-0.994px;">CPA</div>
<svg class="b" style="left:1420.8px;top:509.70000000000005px;" width="14" height="14" viewBox="0 0 14 14"><rect x="1" y="2.5" width="12" height="10.5" rx="1" fill="none" stroke="#8fc29c" stroke-width="1.3"/><rect x="1" y="2.5" width="12" height="2.3" fill="#8fc29c"/><rect x="3" y="0.5" width="1.3" height="3" fill="#8fc29c"/><rect x="9.7" y="0.5" width="1.3" height="3" fill="#8fc29c"/><rect x="8" y="8.5" width="2.3" height="2.3" fill="#8fc29c"/></svg>
<div class="t" id="t61" style="left:1445.3px;top:512.0px;font-size:11.40px;color:#55585c;font-weight:400;letter-spacing:-0.425px;">Date</div>
<div class="t" id="t62" style="left:1420.8px;top:537.8px;font-size:10.00px;color:#98c8a3;font-weight:700;letter-spacing:1.237px;transform:scaleX(0.78);transform-origin:left;">123</div>
<div class="t" id="t63" style="left:1445.3px;top:536.0px;font-size:11.40px;color:#55585c;font-weight:400;letter-spacing:-0.454px;">Landing Page View</div>
<div class="t" id="t64" style="left:1420.8px;top:561.8px;font-size:10.00px;color:#98c8a3;font-weight:700;letter-spacing:1.237px;transform:scaleX(0.78);transform-origin:left;">123</div>
<div class="t" id="t65" style="left:1445.3px;top:560.0px;font-size:11.40px;color:#55585c;font-weight:400;letter-spacing:-1.290px;">LEAD</div>
<div class="t" id="t66" style="left:1420.8px;top:585.8px;font-size:10.00px;color:#98c8a3;font-weight:700;letter-spacing:-1.663px;transform:scaleX(0.78);transform-origin:left;">ABC</div>
<div class="t" id="t67" style="left:1445.3px;top:584.0px;font-size:11.40px;color:#55585c;font-weight:400;letter-spacing:-0.111px;">Product</div>
<div class="t" id="t68" style="left:1420.8px;top:609.8px;font-size:10.00px;color:#98c8a3;font-weight:700;letter-spacing:1.237px;transform:scaleX(0.78);transform-origin:left;">123</div>
<div class="t" id="t69" style="left:1445.3px;top:608.0px;font-size:11.40px;color:#55585c;font-weight:400;letter-spacing:-1.580px;">REVENUE</div>
<div class="t" id="t70" style="left:1420.8px;top:633.8px;font-size:10.00px;color:#98c8a3;font-weight:700;letter-spacing:1.237px;transform:scaleX(0.78);transform-origin:left;">123</div>
<div class="t" id="t71" style="left:1445.3px;top:632.0px;font-size:11.40px;color:#55585c;font-weight:400;letter-spacing:-1.562px;">ROAS</div>
<div class="t" id="t72" style="left:1420.8px;top:657.8px;font-size:10.00px;color:#98c8a3;font-weight:700;letter-spacing:1.237px;transform:scaleX(0.78);transform-origin:left;">123</div>
<div class="t" id="t73" style="left:1445.3px;top:656.0px;font-size:11.40px;color:#55585c;font-weight:400;letter-spacing:-1.562px;">SPEND</div>
<div class="t" id="t74" style="left:1420.8px;top:681.8px;font-size:10.00px;color:#98c8a3;font-weight:700;letter-spacing:-1.663px;transform:scaleX(0.78);transform-origin:left;">ABC</div>
<div class="t" id="t75" style="left:1445.3px;top:680.0px;font-size:11.40px;color:#55585c;font-weight:400;letter-spacing:-0.569px;">Type</div>
<div class="t" id="t76" style="left:1420.8px;top:705.8px;font-size:10.00px;color:#6f95e0;font-weight:700;letter-spacing:1.237px;transform:scaleX(0.78);transform-origin:left;">123</div>
<div class="t" id="t77" style="left:1445.3px;top:704.0px;font-size:11.40px;color:#55585c;font-weight:400;letter-spacing:-0.253px;">Record Count</div>
<svg class="b" style="left:1417.4px;top:887px;" width="19.2" height="19.2" viewBox="0 0 24 24"><path d="M12 2C6.48 2 2 6.48 2 12s4.48 10 10 10 10-4.48 10-10S17.52 2 12 2zm5 11h-4v4h-2v-4H7v-2h4V7h2v4h4v2z" fill="#3f7fe6"/></svg>
<div class="t" id="t78" style="left:1445.4px;top:890.3px;font-size:11.40px;color:#4a70c8;font-weight:400;letter-spacing:0.147px;">Add a field</div>
<svg class="b" style="left:1417.4px;top:911.8px;" width="19.2" height="19.2" viewBox="0 0 24 24"><path d="M12 2C6.48 2 2 6.48 2 12s4.48 10 10 10 10-4.48 10-10S17.52 2 12 2zm5 11h-4v4h-2v-4H7v-2h4V7h2v4h4v2z" fill="#3f7fe6"/></svg>
<div class="t" id="t79" style="left:1445.4px;top:915.6px;font-size:11.40px;color:#4a70c8;font-weight:400;letter-spacing:0.124px;">Add a parameter</div>
<div class="b" style="left:1409px;top:936px;width:239px;height:1px;background:#e3e3e3;"></div>
<svg class="b" style="left:1414.4px;top:944.8px;" width="19.2" height="19.2" viewBox="0 0 24 24"><path d="M12 2C6.48 2 2 6.48 2 12s4.48 10 10 10 10-4.48 10-10S17.52 2 12 2zm5 11h-4v4h-2v-4H7v-2h4V7h2v4h4v2z" fill="#3f7fe6"/></svg>
<div class="t" id="t80" style="left:1442.5px;top:948.6px;font-size:11.40px;color:#4a70c8;font-weight:400;letter-spacing:0.043px;">Add Data</div>
<div class="b" style="left:1649px;top:223px;width:79px;height:749px;background:#fff;"></div>
<div class="b" style="left:1654.7px;top:230.5px;width:67.6px;height:63.4px;border-radius:7px;background:#e9f0fd;"></div>
<div class="b" style="left:1654.7px;top:302.6px;width:67.6px;height:63.5px;border-radius:7px;background:#edf2fc;"></div>
<div class="b" style="left:1654.7px;top:375.2px;width:67.6px;height:63px;border-radius:7px;background:#edf2fc;"></div>
<svg class="b" style="left:1677.5px;top:243px;" width="21" height="21" viewBox="0 0 21 21"><g fill="none" stroke="#1f62d3" stroke-width="2"><rect x="1" y="1" width="19" height="19"/><path d="M1 7.3h19M1 13.7h19"/></g><g fill="#1f62d3"><circle cx="4.2" cy="4.2" r="1"/><circle cx="4.2" cy="10.5" r="1"/><circle cx="4.2" cy="16.8" r="1"/></g></svg>
<div class="t" id="t81" style="left:1688.5px;top:270.3px;font-size:11.60px;color:#2a62c9;font-weight:400;letter-spacing:0.000px;transform:translateX(-50%);">Data</div>
<svg class="b" style="left:1677.5px;top:315.5px;" width="21" height="21" viewBox="0 0 21 21"><g transform="rotate(-45 10.5 10.5)"><rect x="1" y="8" width="19" height="5" rx="2.5" fill="none" stroke="#1f62d3" stroke-width="2"/><rect x="15.5" y="8" width="4.5" height="5" rx="1.5" fill="#1f62d3"/></g></svg>
<div class="t" id="t82" style="left:1659.6px;top:342.2px;font-size:11.60px;color:#2a62c9;font-weight:400;letter-spacing:0.495px;">Properties</div>
<svg class="b" style="left:1678px;top:388.5px;" width="20" height="19" viewBox="0 0 20 19"><path d="M2 2 H18 L11.2 10.5 V17 H8.8 V10.5 Z" fill="none" stroke="#1f62d3" stroke-width="2" stroke-linejoin="round"/><rect x="8.8" y="10" width="2.4" height="7" fill="#1f62d3"/></svg>
<div class="t" id="t83" style="left:1663.6px;top:414.6px;font-size:11.60px;color:#2a62c9;font-weight:400;letter-spacing:0.328px;">Filter bar</div>
<svg class="b" style="left:1680px;top:930px;" width="23" height="23" viewBox="0 0 24 24"><path d="M10 6L8.59 7.41 13.17 12l-4.58 4.59L10 18l6-6z" fill="#303030"/></svg>
<div class="b" style="left:292.2px;top:380.8px;width:227.6px;height:11px;background:#ececec;"></div>
<div class="b" style="left:291.5px;top:392.8px;width:229.4px;height:39.5px;border:1.6px solid #4a80d8;background:#fff;"></div>
<div class="b" style="left:289.0px;top:390.3px;width:5px;height:5px;background:#1f66d6;"></div>
<div class="b" style="left:289.0px;top:410.0px;width:5px;height:5px;background:#1f66d6;"></div>
<div class="b" style="left:289.0px;top:429.8px;width:5px;height:5px;background:#1f66d6;"></div>
<div class="b" style="left:403.7px;top:390.3px;width:5px;height:5px;background:#1f66d6;"></div>
<div class="b" style="left:403.7px;top:429.8px;width:5px;height:5px;background:#1f66d6;"></div>
<div class="b" style="left:518.4px;top:390.3px;width:5px;height:5px;background:#1f66d6;"></div>
<div class="b" style="left:518.4px;top:410.0px;width:5px;height:5px;background:#1f66d6;"></div>
<div class="b" style="left:518.4px;top:429.8px;width:5px;height:5px;background:#1f66d6;"></div>
<div class="t" id="t84" style="left:310.0px;top:406.5px;font-size:11.20px;color:#3d3d3d;font-weight:400;letter-spacing:-0.258px;">Campaign name</div>
<svg class="b" style="left:497.3px;top:411px;" width="5.5" height="3" viewBox="0 0 5.5 3"><path d="M0 0h5.5L2.75 3z" fill="#555"/></svg>
<svg class="b" style="left:0px;top:0px;" width="700" height="700" viewBox="0 0 700 700"><rect x="330.9" y="633.9" width="247.1" height="1" fill="#e6e6e6"/><rect x="330.9" y="614.9" width="247.1" height="1" fill="#e6e6e6"/><rect x="330.9" y="596.0" width="247.1" height="1" fill="#e6e6e6"/><rect x="330.9" y="577.0" width="247.1" height="1" fill="#e6e6e6"/><rect x="330.9" y="558.0" width="247.1" height="1" fill="#e6e6e6"/><rect x="330.9" y="539.1" width="247.1" height="1" fill="#e6e6e6"/><rect x="330.9" y="520.1" width="247.1" height="1" fill="#e6e6e6"/><rect x="330.9" y="501.2" width="247.1" height="1" fill="#e6e6e6"/><rect x="330.9" y="482.2" width="247.1" height="1" fill="#e6e6e6"/><rect x="329.4" y="602.5" width="1.2" height="31.9" fill="#6d95e6"/><rect x="332.7" y="605.6" width="1.2" height="28.8" fill="#6d95e6"/><rect x="335.4" y="599.5" width="1.2" height="34.9" fill="#6d95e6"/><rect x="338.7" y="620.7" width="1.2" height="13.7" fill="#6d95e6"/><rect x="342.1" y="605.6" width="1.2" height="28.8" fill="#6d95e6"/><rect x="344.1" y="615.4" width="1.2" height="19.0" fill="#6d95e6"/><rect x="347.1" y="592.7" width="1.2" height="41.7" fill="#6d95e6"/><rect x="349.4" y="575.2" width="1.2" height="59.2" fill="#6d95e6"/><rect x="350.7" y="538.1" width="1.2" height="96.3" fill="#6d95e6"/><rect x="352.1" y="623.0" width="1.2" height="11.4" fill="#6d95e6"/><rect x="356.7" y="619.2" width="1.2" height="15.2" fill="#6d95e6"/><rect x="358.4" y="605.6" width="1.2" height="28.8" fill="#6d95e6"/><rect x="360.1" y="605.6" width="1.2" height="28.8" fill="#6d95e6"/><rect x="362.7" y="590.4" width="1.2" height="44.0" fill="#6d95e6"/><rect x="366.1" y="598.0" width="1.2" height="36.4" fill="#6d95e6"/><rect x="368.4" y="588.9" width="1.2" height="45.5" fill="#6d95e6"/><rect x="369.4" y="579.0" width="1.2" height="55.4" fill="#6d95e6"/><rect x="375.4" y="601.0" width="1.2" height="33.4" fill="#6d95e6"/><rect x="377.7" y="603.3" width="1.2" height="31.1" fill="#6d95e6"/><rect x="381.1" y="620.0" width="1.2" height="14.4" fill="#6d95e6"/><rect x="384.4" y="588.9" width="1.2" height="45.5" fill="#6d95e6"/><rect x="387.7" y="601.8" width="1.2" height="32.6" fill="#6d95e6"/><rect x="390.1" y="604.1" width="1.2" height="30.3" fill="#6d95e6"/><rect x="396.1" y="585.1" width="1.2" height="49.3" fill="#6d95e6"/><rect x="397.7" y="605.6" width="1.2" height="28.8" fill="#6d95e6"/><rect x="402.1" y="599.5" width="1.2" height="34.9" fill="#6d95e6"/><rect x="404.4" y="619.2" width="1.2" height="15.2" fill="#6d95e6"/><rect x="408.7" y="606.3" width="1.2" height="28.1" fill="#6d95e6"/><rect x="410.4" y="605.6" width="1.2" height="28.8" fill="#6d95e6"/><rect x="412.7" y="602.5" width="1.2" height="31.9" fill="#6d95e6"/><rect x="417.7" y="562.3" width="1.2" height="72.1" fill="#6d95e6"/><rect x="419.4" y="591.2" width="1.2" height="43.2" fill="#6d95e6"/><rect x="422.1" y="601.8" width="1.2" height="32.6" fill="#6d95e6"/><rect x="424.4" y="619.2" width="1.2" height="15.2" fill="#6d95e6"/><rect x="428.7" y="557.0" width="1.2" height="77.4" fill="#6d95e6"/><rect x="431.1" y="596.5" width="1.2" height="37.9" fill="#6d95e6"/><rect x="436.1" y="507.0" width="1.2" height="127.4" fill="#6d95e6"/><rect x="437.1" y="569.2" width="1.2" height="65.2" fill="#6d95e6"/><rect x="439.4" y="601.8" width="1.2" height="32.6" fill="#6d95e6"/><rect x="442.1" y="579.8" width="1.2" height="54.6" fill="#6d95e6"/><rect x="444.4" y="605.6" width="1.2" height="28.8" fill="#6d95e6"/><rect x="446.1" y="616.2" width="1.2" height="18.2" fill="#6d95e6"/><rect x="452.7" y="579.8" width="1.2" height="54.6" fill="#6d95e6"/><rect x="454.4" y="620.7" width="1.2" height="13.7" fill="#6d95e6"/><rect x="458.4" y="609.4" width="1.2" height="25.0" fill="#6d95e6"/><rect x="462.7" y="587.4" width="1.2" height="47.0" fill="#6d95e6"/><rect x="464.4" y="606.3" width="1.2" height="28.1" fill="#6d95e6"/><rect x="467.7" y="550.2" width="1.2" height="84.2" fill="#6d95e6"/><rect x="469.4" y="606.3" width="1.2" height="28.1" fill="#6d95e6"/><rect x="477.7" y="623.8" width="1.2" height="10.6" fill="#6d95e6"/><rect x="484.4" y="554.0" width="1.2" height="80.4" fill="#6d95e6"/><rect x="486.1" y="617.7" width="1.2" height="16.7" fill="#6d95e6"/><rect x="489.4" y="604.1" width="1.2" height="30.3" fill="#6d95e6"/><rect x="492.1" y="566.1" width="1.2" height="68.3" fill="#6d95e6"/><rect x="494.4" y="606.3" width="1.2" height="28.1" fill="#6d95e6"/><rect x="497.1" y="557.0" width="1.2" height="77.4" fill="#6d95e6"/><rect x="500.4" y="566.1" width="1.2" height="68.3" fill="#6d95e6"/><rect x="502.7" y="613.2" width="1.2" height="21.2" fill="#6d95e6"/><rect x="506.1" y="585.1" width="1.2" height="49.3" fill="#6d95e6"/><rect x="507.7" y="611.6" width="1.2" height="22.8" fill="#6d95e6"/><rect x="512.7" y="590.4" width="1.2" height="44.0" fill="#6d95e6"/><rect x="517.7" y="588.1" width="1.2" height="46.3" fill="#6d95e6"/><rect x="519.4" y="620.0" width="1.2" height="14.4" fill="#6d95e6"/><rect x="521.7" y="537.3" width="1.2" height="97.1" fill="#6d95e6"/><rect x="522.7" y="560.1" width="1.2" height="74.3" fill="#6d95e6"/><rect x="525.4" y="596.5" width="1.2" height="37.9" fill="#6d95e6"/><rect x="527.7" y="590.4" width="1.2" height="44.0" fill="#6d95e6"/><rect x="530.1" y="607.1" width="1.2" height="27.3" fill="#6d95e6"/><rect x="532.1" y="598.0" width="1.2" height="36.4" fill="#6d95e6"/><rect x="534.4" y="569.9" width="1.2" height="64.5" fill="#6d95e6"/><rect x="536.1" y="604.1" width="1.2" height="30.3" fill="#6d95e6"/><rect x="540.1" y="573.7" width="1.2" height="60.7" fill="#6d95e6"/><rect x="541.7" y="607.1" width="1.2" height="27.3" fill="#6d95e6"/><rect x="548.7" y="601.0" width="1.2" height="33.4" fill="#6d95e6"/><rect x="551.1" y="604.1" width="1.2" height="30.3" fill="#6d95e6"/><rect x="555.4" y="604.8" width="1.2" height="29.6" fill="#6d95e6"/><rect x="557.7" y="609.4" width="1.2" height="25.0" fill="#6d95e6"/><rect x="561.1" y="624.5" width="1.2" height="9.9" fill="#6d95e6"/><rect x="566.1" y="586.6" width="1.2" height="47.8" fill="#6d95e6"/><rect x="568.4" y="590.4" width="1.2" height="44.0" fill="#6d95e6"/><rect x="570.4" y="610.1" width="1.2" height="24.3" fill="#6d95e6"/><rect x="572.7" y="627.6" width="1.2" height="6.8" fill="#6d95e6"/><rect x="573.4" y="609.4" width="1.2" height="25.0" fill="#6d95e6"/><rect x="575.4" y="604.1" width="1.2" height="30.3" fill="#6d95e6"/><rect x="331.0" y="620.7" width="1" height="13.7" fill="#8aaaf0" opacity="0.9"/><rect x="332.2" y="628.3" width="1" height="6.1" fill="#8aaaf0" opacity="0.9"/><rect x="333.3" y="625.3" width="1" height="9.1" fill="#8aaaf0" opacity="0.9"/><rect x="334.5" y="628.3" width="1" height="6.1" fill="#8aaaf0" opacity="0.9"/><rect x="336.9" y="625.3" width="1" height="9.1" fill="#8aaaf0" opacity="0.9"/><rect x="338.0" y="625.3" width="1" height="9.1" fill="#8aaaf0" opacity="0.9"/><rect x="339.2" y="630.6" width="1" height="3.8" fill="#8aaaf0" opacity="0.9"/><rect x="340.4" y="625.3" width="1" height="9.1" fill="#8aaaf0" opacity="0.9"/><rect x="345.0" y="630.6" width="1" height="3.8" fill="#8aaaf0" opacity="0.9"/><rect x="346.2" y="615.4" width="1" height="19.0" fill="#8aaaf0" opacity="0.9"/><rect x="347.4" y="620.7" width="1" height="13.7" fill="#8aaaf0" opacity="0.9"/><rect x="348.6" y="620.7" width="1" height="13.7" fill="#8aaaf0" opacity="0.9"/><rect x="349.7" y="610.1" width="1" height="24.3" fill="#8aaaf0" opacity="0.9"/><rect x="353.2" y="615.4" width="1" height="19.0" fill="#8aaaf0" opacity="0.9"/><rect x="354.4" y="625.3" width="1" height="9.1" fill="#8aaaf0" opacity="0.9"/><rect x="357.9" y="630.6" width="1" height="3.8" fill="#8aaaf0" opacity="0.9"/><rect x="360.3" y="619.2" width="1" height="15.2" fill="#8aaaf0" opacity="0.9"/><rect x="361.4" y="615.4" width="1" height="19.0" fill="#8aaaf0" opacity="0.9"/><rect x="364.9" y="610.1" width="1" height="24.3" fill="#8aaaf0" opacity="0.9"/><rect x="366.1" y="607.1" width="1" height="27.3" fill="#8aaaf0" opacity="0.9"/><rect x="368.4" y="625.3" width="1" height="9.1" fill="#8aaaf0" opacity="0.9"/><rect x="369.6" y="630.6" width="1" height="3.8" fill="#8aaaf0" opacity="0.9"/><rect x="370.8" y="607.1" width="1" height="27.3" fill="#8aaaf0" opacity="0.9"/><rect x="372.0" y="619.2" width="1" height="15.2" fill="#8aaaf0" opacity="0.9"/><rect x="373.1" y="625.3" width="1" height="9.1" fill="#8aaaf0" opacity="0.9"/><rect x="377.8" y="607.1" width="1" height="27.3" fill="#8aaaf0" opacity="0.9"/><rect x="381.3" y="625.3" width="1" height="9.1" fill="#8aaaf0" opacity="0.9"/><rect x="383.7" y="625.3" width="1" height="9.1" fill="#8aaaf0" opacity="0.9"/><rect x="384.8" y="610.1" width="1" height="24.3" fill="#8aaaf0" opacity="0.9"/><rect x="389.5" y="630.6" width="1" height="3.8" fill="#8aaaf0" opacity="0.9"/><rect x="391.8" y="619.2" width="1" height="15.2" fill="#8aaaf0" opacity="0.9"/><rect x="393.0" y="625.3" width="1" height="9.1" fill="#8aaaf0" opacity="0.9"/><rect x="394.2" y="615.4" width="1" height="19.0" fill="#8aaaf0" opacity="0.9"/><rect x="396.5" y="615.4" width="1" height="19.0" fill="#8aaaf0" opacity="0.9"/><rect x="397.7" y="619.2" width="1" height="15.2" fill="#8aaaf0" opacity="0.9"/><rect x="398.9" y="619.2" width="1" height="15.2" fill="#8aaaf0" opacity="0.9"/><rect x="400.0" y="610.1" width="1" height="24.3" fill="#8aaaf0" opacity="0.9"/><rect x="404.7" y="630.6" width="1" height="3.8" fill="#8aaaf0" opacity="0.9"/><rect x="408.2" y="615.4" width="1" height="19.0" fill="#8aaaf0" opacity="0.9"/><rect x="409.4" y="620.7" width="1" height="13.7" fill="#8aaaf0" opacity="0.9"/><rect x="410.6" y="615.4" width="1" height="19.0" fill="#8aaaf0" opacity="0.9"/><rect x="411.7" y="620.7" width="1" height="13.7" fill="#8aaaf0" opacity="0.9"/><rect x="412.9" y="628.3" width="1" height="6.1" fill="#8aaaf0" opacity="0.9"/><rect x="414.1" y="607.1" width="1" height="27.3" fill="#8aaaf0" opacity="0.9"/><rect x="416.4" y="620.7" width="1" height="13.7" fill="#8aaaf0" opacity="0.9"/><rect x="418.8" y="628.3" width="1" height="6.1" fill="#8aaaf0" opacity="0.9"/><rect x="419.9" y="630.6" width="1" height="3.8" fill="#8aaaf0" opacity="0.9"/><rect x="421.1" y="630.6" width="1" height="3.8" fill="#8aaaf0" opacity="0.9"/><rect x="422.3" y="630.6" width="1" height="3.8" fill="#8aaaf0" opacity="0.9"/><rect x="423.4" y="625.3" width="1" height="9.1" fill="#8aaaf0" opacity="0.9"/><rect x="425.8" y="625.3" width="1" height="9.1" fill="#8aaaf0" opacity="0.9"/><rect x="426.9" y="628.3" width="1" height="6.1" fill="#8aaaf0" opacity="0.9"/><rect x="428.1" y="620.7" width="1" height="13.7" fill="#8aaaf0" opacity="0.9"/><rect x="429.3" y="607.1" width="1" height="27.3" fill="#8aaaf0" opacity="0.9"/><rect x="431.6" y="615.4" width="1" height="19.0" fill="#8aaaf0" opacity="0.9"/><rect x="434.0" y="610.1" width="1" height="24.3" fill="#8aaaf0" opacity="0.9"/><rect x="437.5" y="625.3" width="1" height="9.1" fill="#8aaaf0" opacity="0.9"/><rect x="441.0" y="619.2" width="1" height="15.2" fill="#8aaaf0" opacity="0.9"/><rect x="442.2" y="620.7" width="1" height="13.7" fill="#8aaaf0" opacity="0.9"/><rect x="443.3" y="607.1" width="1" height="27.3" fill="#8aaaf0" opacity="0.9"/><rect x="445.7" y="620.7" width="1" height="13.7" fill="#8aaaf0" opacity="0.9"/><rect x="446.8" y="615.4" width="1" height="19.0" fill="#8aaaf0" opacity="0.9"/><rect x="449.2" y="620.7" width="1" height="13.7" fill="#8aaaf0" opacity="0.9"/><rect x="453.9" y="625.3" width="1" height="9.1" fill="#8aaaf0" opacity="0.9"/><rect x="456.2" y="607.1" width="1" height="27.3" fill="#8aaaf0" opacity="0.9"/><rect x="458.5" y="615.4" width="1" height="19.0" fill="#8aaaf0" opacity="0.9"/><rect x="459.7" y="607.1" width="1" height="27.3" fill="#8aaaf0" opacity="0.9"/><rect x="465.6" y="615.4" width="1" height="19.0" fill="#8aaaf0" opacity="0.9"/><rect x="469.1" y="619.2" width="1" height="15.2" fill="#8aaaf0" opacity="0.9"/><rect x="470.2" y="628.3" width="1" height="6.1" fill="#8aaaf0" opacity="0.9"/><rect x="473.7" y="615.4" width="1" height="19.0" fill="#8aaaf0" opacity="0.9"/><rect x="477.3" y="607.1" width="1" height="27.3" fill="#8aaaf0" opacity="0.9"/><rect x="479.6" y="615.4" width="1" height="19.0" fill="#8aaaf0" opacity="0.9"/><rect x="480.8" y="619.2" width="1" height="15.2" fill="#8aaaf0" opacity="0.9"/><rect x="481.9" y="615.4" width="1" height="19.0" fill="#8aaaf0" opacity="0.9"/><rect x="483.1" y="628.3" width="1" height="6.1" fill="#8aaaf0" opacity="0.9"/><rect x="484.3" y="607.1" width="1" height="27.3" fill="#8aaaf0" opacity="0.9"/><rect x="486.6" y="625.3" width="1" height="9.1" fill="#8aaaf0" opacity="0.9"/><rect x="491.3" y="620.7" width="1" height="13.7" fill="#8aaaf0" opacity="0.9"/><rect x="492.5" y="607.1" width="1" height="27.3" fill="#8aaaf0" opacity="0.9"/><rect x="493.6" y="630.6" width="1" height="3.8" fill="#8aaaf0" opacity="0.9"/><rect x="494.8" y="625.3" width="1" height="9.1" fill="#8aaaf0" opacity="0.9"/><rect x="497.1" y="620.7" width="1" height="13.7" fill="#8aaaf0" opacity="0.9"/><rect x="498.3" y="619.2" width="1" height="15.2" fill="#8aaaf0" opacity="0.9"/><rect x="500.7" y="619.2" width="1" height="15.2" fill="#8aaaf0" opacity="0.9"/><rect x="503.0" y="620.7" width="1" height="13.7" fill="#8aaaf0" opacity="0.9"/><rect x="504.2" y="625.3" width="1" height="9.1" fill="#8aaaf0" opacity="0.9"/><rect x="505.3" y="620.7" width="1" height="13.7" fill="#8aaaf0" opacity="0.9"/><rect x="506.5" y="615.4" width="1" height="19.0" fill="#8aaaf0" opacity="0.9"/><rect x="508.8" y="610.1" width="1" height="24.3" fill="#8aaaf0" opacity="0.9"/><rect x="510.0" y="615.4" width="1" height="19.0" fill="#8aaaf0" opacity="0.9"/><rect x="512.4" y="630.6" width="1" height="3.8" fill="#8aaaf0" opacity="0.9"/><rect x="514.7" y="607.1" width="1" height="27.3" fill="#8aaaf0" opacity="0.9"/><rect x="519.4" y="620.7" width="1" height="13.7" fill="#8aaaf0" opacity="0.9"/><rect x="520.5" y="628.3" width="1" height="6.1" fill="#8aaaf0" opacity="0.9"/><rect x="526.4" y="620.7" width="1" height="13.7" fill="#8aaaf0" opacity="0.9"/><rect x="527.6" y="625.3" width="1" height="9.1" fill="#8aaaf0" opacity="0.9"/><rect x="529.9" y="619.2" width="1" height="15.2" fill="#8aaaf0" opacity="0.9"/><rect x="532.2" y="628.3" width="1" height="6.1" fill="#8aaaf0" opacity="0.9"/><rect x="533.4" y="610.1" width="1" height="24.3" fill="#8aaaf0" opacity="0.9"/><rect x="534.6" y="625.3" width="1" height="9.1" fill="#8aaaf0" opacity="0.9"/><rect x="535.8" y="628.3" width="1" height="6.1" fill="#8aaaf0" opacity="0.9"/><rect x="539.3" y="615.4" width="1" height="19.0" fill="#8aaaf0" opacity="0.9"/><rect x="541.6" y="619.2" width="1" height="15.2" fill="#8aaaf0" opacity="0.9"/><rect x="542.8" y="615.4" width="1" height="19.0" fill="#8aaaf0" opacity="0.9"/><rect x="547.5" y="615.4" width="1" height="19.0" fill="#8aaaf0" opacity="0.9"/><rect x="549.8" y="625.3" width="1" height="9.1" fill="#8aaaf0" opacity="0.9"/><rect x="551.0" y="607.1" width="1" height="27.3" fill="#8aaaf0" opacity="0.9"/><rect x="552.1" y="615.4" width="1" height="19.0" fill="#8aaaf0" opacity="0.9"/><rect x="553.3" y="615.4" width="1" height="19.0" fill="#8aaaf0" opacity="0.9"/><rect x="558.0" y="607.1" width="1" height="27.3" fill="#8aaaf0" opacity="0.9"/><rect x="559.2" y="620.7" width="1" height="13.7" fill="#8aaaf0" opacity="0.9"/><rect x="561.5" y="625.3" width="1" height="9.1" fill="#8aaaf0" opacity="0.9"/><rect x="562.7" y="619.2" width="1" height="15.2" fill="#8aaaf0" opacity="0.9"/><rect x="563.8" y="615.4" width="1" height="19.0" fill="#8aaaf0" opacity="0.9"/><rect x="565.0" y="630.6" width="1" height="3.8" fill="#8aaaf0" opacity="0.9"/><rect x="567.3" y="630.6" width="1" height="3.8" fill="#8aaaf0" opacity="0.9"/><rect x="568.5" y="607.1" width="1" height="27.3" fill="#8aaaf0" opacity="0.9"/><rect x="569.7" y="607.1" width="1" height="27.3" fill="#8aaaf0" opacity="0.9"/><rect x="570.9" y="619.2" width="1" height="15.2" fill="#8aaaf0" opacity="0.9"/><rect x="572.0" y="628.3" width="1" height="6.1" fill="#8aaaf0" opacity="0.9"/><rect x="573.2" y="610.1" width="1" height="24.3" fill="#8aaaf0" opacity="0.9"/><rect x="574.4" y="625.3" width="1" height="9.1" fill="#8aaaf0" opacity="0.9"/><rect x="575.5" y="615.4" width="1" height="19.0" fill="#8aaaf0" opacity="0.9"/><rect x="330.9" y="633.9" width="247.10000000000002" height="1" fill="#cfcfcf"/></svg>
<div class="b" style="left:330.9px;top:462px;width:17.5px;height:7px;background:#4e80e3;"></div>
<div class="t" id="t85" style="left:351.9px;top:461.4px;font-size:8.50px;color:#666;font-weight:400;letter-spacing:-0.322px;">SPEND</div>
<div class="t" id="t86" style="left:321.0px;top:478.6px;font-size:8.40px;color:#444;font-weight:400;letter-spacing:0.000px;transform:translateX(-100%);">20M</div>
<div class="t" id="t87" style="left:321.0px;top:516.3px;font-size:8.40px;color:#444;font-weight:400;letter-spacing:0.000px;transform:translateX(-100%);">15M</div>
<div class="t" id="t88" style="left:321.0px;top:554.5px;font-size:8.40px;color:#444;font-weight:400;letter-spacing:0.000px;transform:translateX(-100%);">10M</div>
<div class="t" id="t89" style="left:321.0px;top:592.8px;font-size:8.40px;color:#444;font-weight:400;letter-spacing:0.000px;transform:translateX(-100%);">5M</div>
<div class="t" id="t90" style="left:321.0px;top:630.3px;font-size:8.40px;color:#444;font-weight:400;letter-spacing:0.000px;transform:translateX(-100%);">0</div>
<div class="t" id="t91" style="left:329.9px;top:640.2px;font-size:8.60px;color:#444;font-weight:400;letter-spacing:0.000px;transform:translateX(-50%);">Jan 2</div>
<div class="t" id="t92" style="left:371.3px;top:640.2px;font-size:8.60px;color:#444;font-weight:400;letter-spacing:0.000px;transform:translateX(-50%);">Feb 6</div>
<div class="t" id="t93" style="left:412.2px;top:640.2px;font-size:8.60px;color:#444;font-weight:400;letter-spacing:0.000px;transform:translateX(-50%);">Mar 13</div>
<div class="t" id="t94" style="left:453.0px;top:640.2px;font-size:8.60px;color:#444;font-weight:400;letter-spacing:0.000px;transform:translateX(-50%);">Apr 17</div>
<div class="t" id="t95" style="left:494.3px;top:640.2px;font-size:8.60px;color:#444;font-weight:400;letter-spacing:0.000px;transform:translateX(-50%);">May 22</div>
<div class="t" id="t96" style="left:535.1px;top:640.2px;font-size:8.60px;color:#444;font-weight:400;letter-spacing:0.000px;transform:translateX(-50%);">Jun 26</div>
<div class="t" id="t97" style="left:576.0px;top:640.2px;font-size:8.60px;color:#444;font-weight:400;letter-spacing:0.000px;transform:translateX(-50%);">Jul 31</div>
<svg class="b" style="left:686px;top:441px;" width="38" height="38" viewBox="0 0 38 38"><circle cx="19" cy="19" r="14.5" fill="none" stroke="#7b7cf0" stroke-width="4"/><path d="M19.8 20.5 L19.8 31 L22.3 28.6 L24 32.5 L25.6 31.8 L24 28 L27.4 28 Z" fill="#fff" stroke="#222" stroke-width="0.8"/></svg>
</div></div>
<div class="b" style="left:161px;top:946px;width:468.5px;height:72px;background:#2450e0;"></div>
<div class="b" style="left:148px;top:946px;width:16px;height:60px;background:#2450e0;"></div>
<svg class="b" style="left:60px;top:900px;" width="150" height="160" viewBox="0 0 150 160"><text x="44" y="112" font-family="Liberation Sans" font-weight="700" font-size="95" fill="#2450e0" stroke="#2450e0" stroke-width="26" stroke-linejoin="round" transform="translate(44 0) scale(1.05 1) translate(-44 0)">2</text><text x="44" y="112" font-family="Liberation Sans" font-weight="700" font-size="95" fill="#ffffff" transform="translate(44 0) scale(1.05 1) translate(-44 0)">2</text></svg>
<div class="t" id="t98" style="left:182.0px;top:957.9px;font-size:48.00px;color:#ffffff;font-weight:700;letter-spacing:-1.351px;">Tạo biểu đồ đầu tiên</div>
</body></html>
